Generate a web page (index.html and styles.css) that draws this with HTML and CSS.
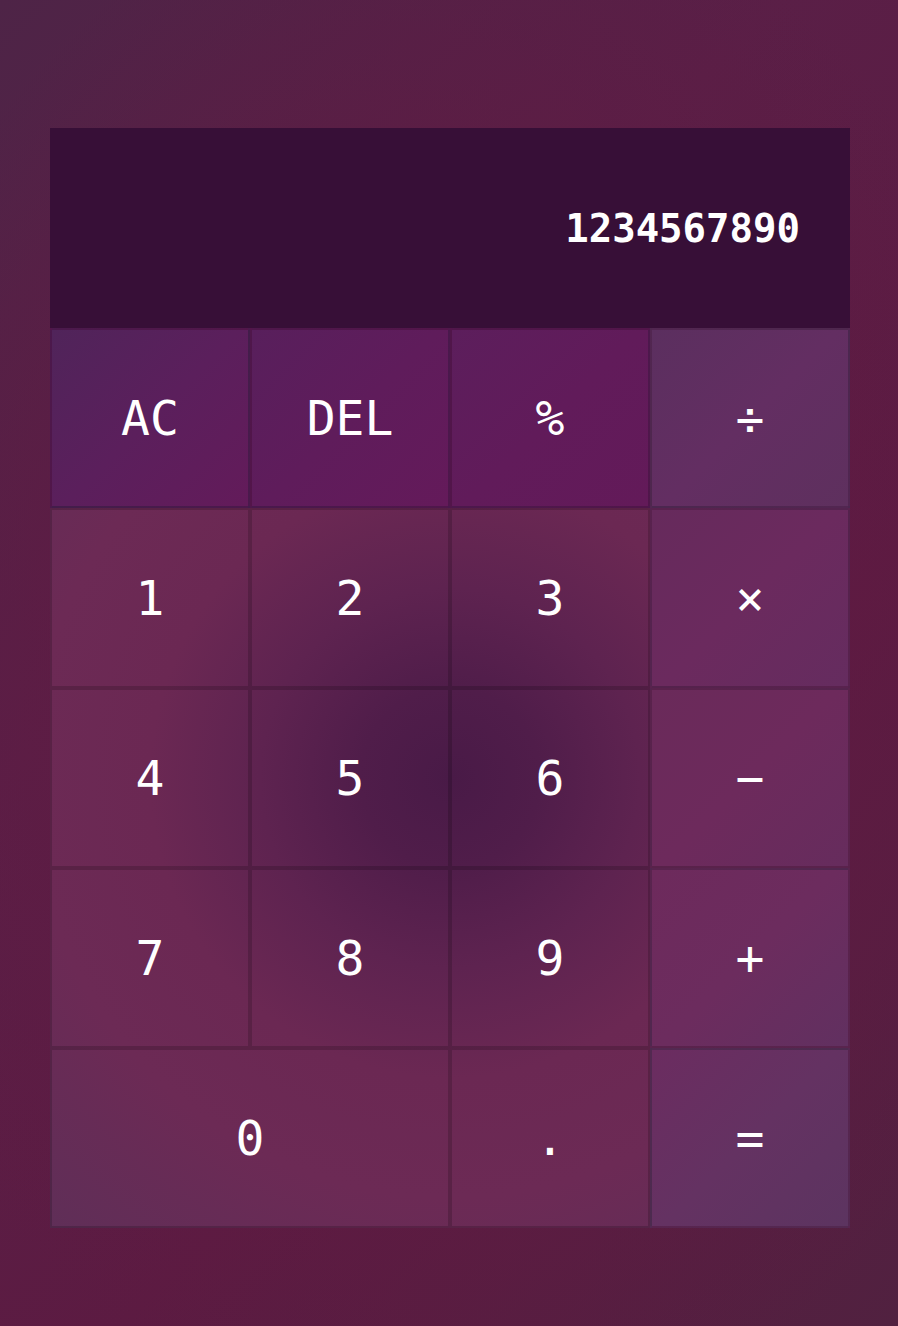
FILE: index.html
```html
<!DOCTYPE html>
<html lang="en">
<head>
<meta charset="utf-8">
<title>Calculator</title>
<link rel="stylesheet" href="styles.css">
</head>
<body>
<div class="calculator">
  <div class="display">
    <div class="current">1234567890</div>
  </div>
  <div class="keys">
    <button class="key fn">AC</button>
    <button class="key fn">DEL</button>
    <button class="key fn">%</button>
    <button class="key op op-div">÷</button>
    <button class="key">1</button>
    <button class="key">2</button>
    <button class="key">3</button>
    <button class="key op op-mul">×</button>
    <button class="key">4</button>
    <button class="key">5</button>
    <button class="key">6</button>
    <button class="key op op-sub">−</button>
    <button class="key">7</button>
    <button class="key">8</button>
    <button class="key">9</button>
    <button class="key op op-add">+</button>
    <button class="key span-two">0</button>
    <button class="key">.</button>
    <button class="key op op-eq">=</button>
  </div>
</div>
</body>
</html>
```

FILE: styles.css
```css
* {
  box-sizing: border-box;
}

html, body {
  margin: 0;
  padding: 0;
}

body {
  min-height: 1326px;
  padding: 128px 0 0 50px;
  background:
    radial-gradient(ellipse 70% 60% at 50% 50%, rgba(100, 22, 62, 1) 0%, rgba(96, 26, 66, 0.7) 45%, rgba(96, 26, 66, 0) 100%),
    linear-gradient(135deg, #4e2447 0%, #5a1f47 35%, #5c1b42 65%, #512140 100%);
  font-family: "DejaVu Sans Mono", "Liberation Mono", monospace;
}

.calculator {
  width: 800px;
}

.display {
  height: 200px;
  background: #370f37;
  display: flex;
  align-items: center;
  justify-content: flex-end;
  padding: 0 50px;
}

.current {
  color: #ffffff;
  font-size: 39px;
  font-weight: bold;
  line-height: 1;
}

.keys {
  display: grid;
  grid-template-columns: repeat(4, 200px);
  grid-auto-rows: 180px;
  background:
    radial-gradient(circle at 50% 50%, #491a47 0px, #501d4a 90px, #5e2350 190px, #6b2853 300px, #6c2a55 420px, #5e2f58 620px);
}

.key {
  border: 2px solid rgba(0, 0, 0, 0.17);
  background: transparent;
  color: #ffffff;
  font-family: "DejaVu Sans Mono", "Liberation Mono", monospace;
  font-size: 48px;
  padding: 0;
  margin: 0;
  line-height: 1;
  cursor: pointer;
}

.fn {
  background: linear-gradient(135deg, #50245a 0%, #5b1f5c 50%, #631b5a 100%);
}

.fn:nth-child(2) {
  background: linear-gradient(135deg, #581f5c 0%, #5f1c5b 50%, #641a5a 100%);
}

.fn:nth-child(3) {
  background: linear-gradient(135deg, #5c1e5c 0%, #611b5a 50%, #631a59 100%);
}

.op-div {
  background: linear-gradient(135deg, #5b2f5f 0%, #632e62 50%, #5e305e 100%);
}

.op-mul {
  background: linear-gradient(135deg, #662a5c 0%, #6b2a5e 50%, #652c5f 100%);
}

.op-sub {
  background: linear-gradient(135deg, #6a2a5a 0%, #6d2a5c 50%, #662c5d 100%);
}

.op-add {
  background: linear-gradient(135deg, #6d2a5c 0%, #6c2c5e 50%, #613060 100%);
}

.op-eq {
  background: linear-gradient(135deg, #6b2c60 0%, #643262 50%, #5c3460 100%);
}

.span-two {
  grid-column: span 2;
}
```
